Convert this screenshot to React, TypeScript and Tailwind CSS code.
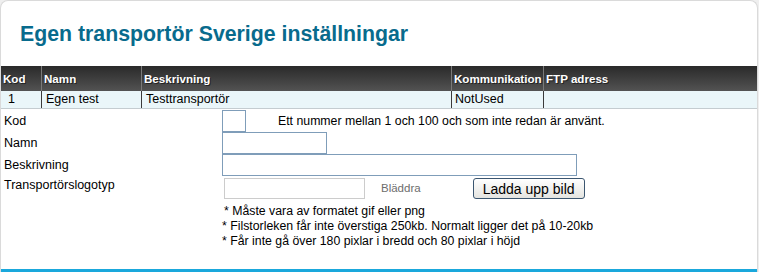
import React from "react";

const cols = [
  { w: "w-[41px]", h: "Kod", d: "1", dp: "pl-[7px]" },
  { w: "w-[100px]", h: "Namn", d: "Egen test", dp: "pl-[4px]" },
  { w: "w-[310px]", h: "Beskrivning", d: "Testtransportör", dp: "pl-[4px]" },
  { w: "w-[92px]", h: "Kommunikation", d: "NotUsed", dp: "pl-[3px]" },
  { w: "flex-1", h: "FTP adress", d: "", dp: "pl-[3px]" },
];

export default function App() {
  return (
    <div
      className="h-[272px] w-[759px] bg-[#efefef] text-black"
      style={{ fontFamily: '"Liberation Sans", Arial, sans-serif' }}
    >
      <div className="flex h-full w-[758px] flex-col rounded-t-[8px] border-x border-t border-[#dadada] bg-white">
        <div className="h-[65px] pl-[19px] pt-[19px]">
          <h1 className="text-[21.3px] font-bold leading-[28px] text-[#086b8d]">
            Egen transportör Sverige inställningar
          </h1>
        </div>

        {/* Table header */}
        <div className="flex h-[25px] bg-gradient-to-b from-[#2a2a2a] to-[#535353] text-[11.6px] font-bold text-white [text-shadow:1px_1px_0_#222]">
          {cols.map((c, i) => (
            <div
              key={i}
              className={`${c.w} flex items-center overflow-hidden whitespace-nowrap border-r border-[#7a7a7a] pl-[2px] last:border-r-0`}
            >
              {c.h}
            </div>
          ))}
        </div>
        {/* Data row */}
        <div className="flex h-[18px] border-b border-[#c4ccd0] bg-[#eaf6f9] text-[12.5px]">
          {cols.map((c, i) => (
            <div
              key={i}
              className={`${c.w} ${c.dp} flex items-center border-r border-[#3a3a3a] last:border-r-0`}
            >
              {c.d}
            </div>
          ))}
        </div>

        {/* Form */}
        <div className="flex flex-col pt-[1px] text-[12.5px]">
          <div className="flex h-[22px] items-center">
            <div className="w-[221px] pl-[3px]">Kod</div>
            <div className="h-[22px] w-[24px] border border-[#7f9db9] bg-white" />
            <div className="pl-[32px] text-[12.3px]">
              Ett nummer mellan 1 och 100 och som inte redan är använt.
            </div>
          </div>
          <div className="flex h-[22px] items-center">
            <div className="w-[221px] pl-[3px]">Namn</div>
            <div className="h-[22px] w-[105px] border border-[#7f9db9] bg-white" />
          </div>
          <div className="flex h-[22px] items-center">
            <div className="w-[221px] pl-[3px]">Beskrivning</div>
            <div className="h-[22px] w-[355px] border border-[#7f9db9] bg-white" />
          </div>
          <div className="flex pt-[2px]">
            <div className="w-[223px] pl-[3px] leading-[15px]">Transportörslogotyp</div>
            <div className="flex flex-col">
              <div className="flex items-center">
                <div className="h-[21px] w-[141px] border border-[#cccccc] bg-white" />
                <span className="pl-[16px] text-[11.5px] text-[#6d6d6d]">Bläddra</span>
                <button className="ml-[52px] flex h-[21px] w-[112px] items-center justify-center rounded-[3px] border border-[#3b5670] bg-gradient-to-b from-[#ffffff] to-[#e4e4e0] text-[14px] leading-none text-black">
                  Ladda upp bild
                </button>
              </div>
              <div className="-ml-[2px] pt-[5px] text-[12.3px] leading-[15px]">
                <div className="pl-[2px]">* Måste vara av formatet gif eller png</div>
                <div>* Filstorleken får inte överstiga 250kb. Normalt ligger det på 10-20kb</div>
                <div>* Får inte gå över 180 pixlar i bredd och 80 pixlar i höjd</div>
              </div>
            </div>
          </div>
        </div>

        <div className="flex-1" />
        <div className="h-[3px] bg-[#1aa8dc]" />
      </div>
    </div>
  );
}
